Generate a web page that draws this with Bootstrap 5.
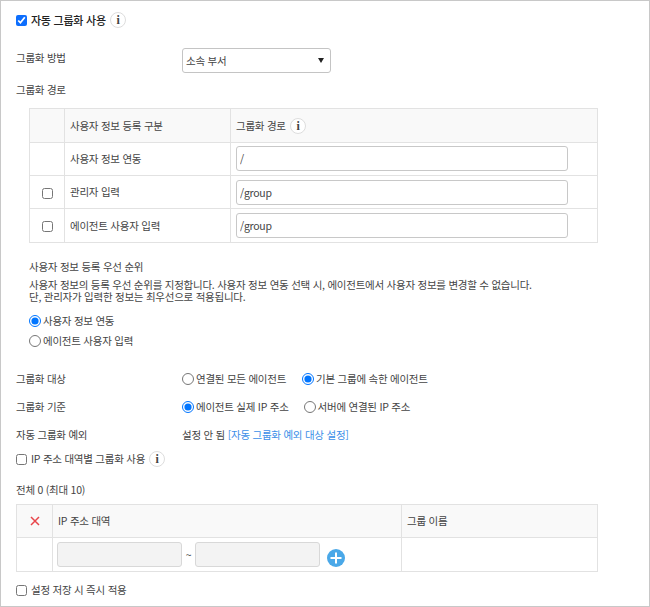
<!doctype html>
<html lang="ko">
<head>
  <meta charset="utf-8" />
  <meta name="viewport" content="width=device-width, initial-scale=1" />
  <title>자동 그룹화</title>
  <link href="https://cdn.jsdelivr.net/npm/bootstrap@5.3.5/dist/css/bootstrap.min.css" rel="stylesheet" />
  <style>
    body {
      font-family: "Noto Sans CJK KR", "Liberation Sans", sans-serif;
      font-size: 10.5px;
      line-height: 16px;
      letter-spacing: -0.25px;
      color: #444;
      margin: 0;
    }
    .frame {
      width: 650px;
      height: 607px;
      border: 1px solid #c8c8c8;
      padding: 0 15px;
      overflow: hidden;
    }
    .chk {
      width: 11px;
      height: 11px;
      margin: 0 4px 0 0;
      flex: none;
      accent-color: #0d6efd;
    }
    .rad {
      width: 12px;
      height: 12px;
      margin: 0 2px 0 0;
      flex: none;
    }
    .title-row { height: 16px; margin-top: 11px; font-size: 11px; color: #222; font-weight: 500; }
    .info {
      width: 16px;
      height: 16px;
      margin-left: 4px;
      flex: none;
    }
    .field-row { display: flex; align-items: center; }
    .field-label { width: 166px; flex: none; }
    .label-up { margin-bottom: 5px; }
    .fake-select {
      width: 149px;
      height: 25px;
      border: 1px solid #c4c4c4;
      border-radius: 3px;
      padding: 0 6px 0 3px;
      font-size: 10.5px;
      color: #444;
      background: #fff;
    }
    .caret-down {
      width: 0;
      height: 0;
      border-left: 3px solid transparent;
      border-right: 3px solid transparent;
      border-top: 5px solid #222;
    }
    .grid-tbl {
      border-collapse: collapse;
      table-layout: fixed;
      margin: 0;
      color: #444;
    }
    .grid-tbl th, .grid-tbl td {
      border: 1px solid #e2e2e2;
      padding: 0 5px;
      font-weight: 400;
      vertical-align: middle;
    }
    .grid-tbl th { background: #f9f9f9; height: 34px; }
    .grid-tbl td { height: 33px; }
    .path-tbl { width: 569px; margin-left: 13px; margin-top: 10px; }
    .path-tbl tr:last-child td { height: 34px; }
    .ip-tbl { width: 582px; margin-top: 6px; }
    .ip-tbl th { height: 33px; }
    .ip-tbl td { height: 34px; }
    .txt-input {
      height: 25px;
      width: 332px;
      border: 1px solid #c8c8c8;
      border-radius: 3px;
      padding: 0 3px;
      font-size: 10.5px;
      color: #444;
      font-family: inherit;
      letter-spacing: inherit;
      display: block;
    }
    .input-up { margin-bottom: 1px; }
    .ip-input {
      height: 25px;
      width: 125px;
      border: 1px solid #d8d8d8;
      border-radius: 3px;
      background: #f3f3f3;
      display: block;
    }
    .plus-btn { margin-left: 7px; margin-top: 6px; flex: none; }
    .prio { margin-left: 13px; }
    .opt-link { color: #3b8fe8; text-decoration: none; }
  </style>
</head>
<body>
  <div class="frame">
    <div class="d-flex align-items-center title-row">
      <input type="checkbox" class="chk" checked />
      <span>자동 그룹화 사용</span>
      <svg class="info" viewBox="0 0 16 16"><circle cx="8" cy="8" r="7.5" fill="#fff" stroke="#ddd"/><text x="8" y="12" text-anchor="middle" font-family="Liberation Serif" font-weight="700" font-size="12" fill="#444">i</text></svg>
    </div>

    <div class="field-row" style="margin-top:20px">
      <div class="field-label label-up">그룹화 방법</div>
      <div class="fake-select d-flex align-items-center justify-content-between"><span>소속 부서</span><span class="caret-down"></span></div>
    </div>
    <div style="margin-top:9px">그룹화 경로</div>

    <table class="grid-tbl path-tbl">
      <colgroup><col style="width:35px" /><col style="width:166px" /><col /></colgroup>
      <tr>
        <th></th>
        <th>사용자 정보 등록 구분</th>
        <th><span class="d-flex align-items-center">그룹화 경로<svg class="info" viewBox="0 0 16 16"><circle cx="8" cy="8" r="7.5" fill="#fff" stroke="#ddd"/><text x="8" y="12" text-anchor="middle" font-family="Liberation Serif" font-weight="700" font-size="12" fill="#444">i</text></svg></span></th>
      </tr>
      <tr>
        <td></td>
        <td>사용자 정보 연동</td>
        <td><input class="txt-input input-up" type="text" value="/" /></td>
      </tr>
      <tr>
        <td class="text-center"><input type="checkbox" class="chk m-0 align-middle" /></td>
        <td>관리자 입력</td>
        <td><input class="txt-input" type="text" value="/group" /></td>
      </tr>
      <tr>
        <td class="text-center"><input type="checkbox" class="chk m-0 align-middle" /></td>
        <td>에이전트 사용자 입력</td>
        <td><input class="txt-input" type="text" value="/group" /></td>
      </tr>
    </table>

    <div class="prio" style="margin-top:16px">사용자 정보 등록 우선 순위</div>
    <div class="prio" style="margin-top:4px;line-height:12px">사용자 정보의 등록 우선 순위를 지정합니다. 사용자 정보 연동 선택 시, 에이전트에서 사용자 정보를 변경할 수 없습니다.<br />단, 관리자가 입력한 정보는 최우선으로 적용됩니다.</div>
    <div class="prio d-flex align-items-center" style="margin-top:10px"><input type="radio" class="rad" name="p" checked />사용자 정보 연동</div>
    <div class="prio d-flex align-items-center" style="margin-top:4px"><input type="radio" class="rad" name="p" />에이전트 사용자 입력</div>

    <div class="field-row" style="margin-top:22px">
      <div class="field-label">그룹화 대상</div>
      <div class="d-flex align-items-center"><input type="radio" class="rad" name="t" />연결된 모든 에이전트</div>
      <div class="d-flex align-items-center" style="margin-left:16px"><input type="radio" class="rad" name="t" checked />기본 그룹에 속한 에이전트</div>
    </div>
    <div class="field-row" style="margin-top:12px">
      <div class="field-label">그룹화 기준</div>
      <div class="d-flex align-items-center"><input type="radio" class="rad" name="b" checked />에이전트 실제 IP 주소</div>
      <div class="d-flex align-items-center" style="margin-left:15px"><input type="radio" class="rad" name="b" />서버에 연결된 IP 주소</div>
    </div>
    <div class="field-row" style="margin-top:12px">
      <div class="field-label">자동 그룹화 예외</div>
      <div>설정 안 됨 <a href="#" class="opt-link">[자동 그룹화 예외 대상 설정]</a></div>
    </div>
    <div class="d-flex align-items-center" style="margin-top:8px">
      <input type="checkbox" class="chk" />
      <span>IP 주소 대역별 그룹화 사용</span>
      <svg class="info" viewBox="0 0 16 16"><circle cx="8" cy="8" r="7.5" fill="#fff" stroke="#ddd"/><text x="8" y="12" text-anchor="middle" font-family="Liberation Serif" font-weight="700" font-size="12" fill="#444">i</text></svg>
    </div>

    <div style="margin-top:15px">전체 0 (최대 10)</div>
    <table class="grid-tbl ip-tbl">
      <colgroup><col style="width:36px" /><col style="width:349px" /><col /></colgroup>
      <tr>
        <th class="text-center p-0"><svg width="10" height="10" viewBox="0 0 10 10" class="d-block mx-auto"><path d="M1 1l8 8M9 1l-8 8" stroke="#e8454a" stroke-width="1.5" fill="none"/></svg></th>
        <th>IP 주소 대역</th>
        <th>그룹 이름</th>
      </tr>
      <tr>
        <td></td>
        <td class="py-0" style="padding-left:4px">
          <div class="d-flex align-items-center">
            <input class="ip-input" type="text" />
            <span class="text-center" style="width:13px">~</span>
            <input class="ip-input" type="text" />
            <svg class="plus-btn" width="18" height="18" viewBox="0 0 18 18"><circle cx="9" cy="9" r="9" fill="#4aa8e8"/><path d="M9 3.5v11M3.5 9h11" stroke="#fff" stroke-width="2"/></svg>
          </div>
        </td>
        <td></td>
      </tr>
    </table>
    <div class="d-flex align-items-center" style="margin-top:10px">
      <input type="checkbox" class="chk" />
      <span>설정 저장 시 즉시 적용</span>
    </div>
  </div>
  <script src="https://cdn.jsdelivr.net/npm/bootstrap@5.3.5/dist/js/bootstrap.bundle.min.js"></script>
</body>
</html>
